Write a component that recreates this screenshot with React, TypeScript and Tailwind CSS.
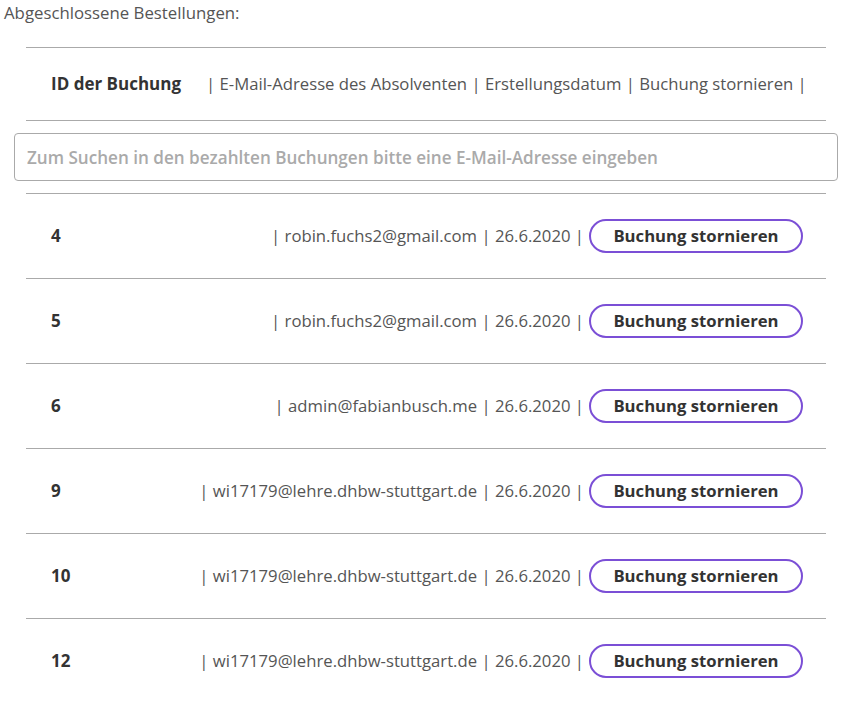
import React from "react";

const rows = [
    { id: "4", email: "robin.fuchs2@gmail.com", date: "26.6.2020" },
    { id: "5", email: "robin.fuchs2@gmail.com", date: "26.6.2020" },
    { id: "6", email: "admin@fabianbusch.me", date: "26.6.2020" },
    { id: "9", email: "wi17179@lehre.dhbw-stuttgart.de", date: "26.6.2020" },
    { id: "10", email: "wi17179@lehre.dhbw-stuttgart.de", date: "26.6.2020" },
    { id: "12", email: "wi17179@lehre.dhbw-stuttgart.de", date: "26.6.2020" },
];

const App = () => {
    return (
        <div className="w-[854px] h-[702px] overflow-hidden bg-white text-[#444] font-['Open_Sans',sans-serif]">
            <p className="pl-[4px] pt-[1px] text-[16.8px] leading-[24px] text-[#555]">Abgeschlossene Bestellungen:</p>

            <div className="mx-[26px] mt-[22px] border-t border-[#aaa] w-[800px]">
                <div className="h-[72px] flex items-center pl-[25px] text-[16.7px]">
                    <span className="font-bold text-[#333] w-[155px] text-[17px]">ID der Buchung</span>
                    <span className="text-[#555]">| E-Mail-Adresse des Absolventen | Erstellungsdatum | Buchung stornieren |</span>
                </div>
            </div>
            <div className="mx-[26px] border-t border-[#aaa] w-[800px]" />

            <div className="px-[14px] mt-[12px]">
                <input
                    type="text"
                    placeholder="Zum Suchen in den bezahlten Buchungen bitte eine E-Mail-Adresse eingeben"
                    className="w-[824px] h-[48px] border border-[#aaa] rounded-[4px] px-[12px] text-[17.1px] font-semibold placeholder:text-[#aaa] outline-none"
                />
            </div>

            <div className="mx-[26px] mt-[12px] w-[800px]">
                {rows.map((r, i) => (
                    <div key={i} className="border-t border-[#aaa] h-[85px] flex items-center pl-[25px] pr-[23px] text-[16.7px]">
                        <span className="font-bold text-[#333] w-[40px] text-[17px]">{r.id}</span>
                        <span className="flex-1 text-right text-[#555] pr-[5px] whitespace-nowrap">| {r.email} | {r.date} |</span>
                        <button
                            type="button"
                            className="w-[214px] h-[34px] rounded-full border-2 border-[#7b4fd6] font-bold text-[#333] text-[16.7px] bg-white"
                        >
                            Buchung stornieren
                        </button>
                    </div>
                ))}
            </div>
        </div>
    );
};

export default App;
